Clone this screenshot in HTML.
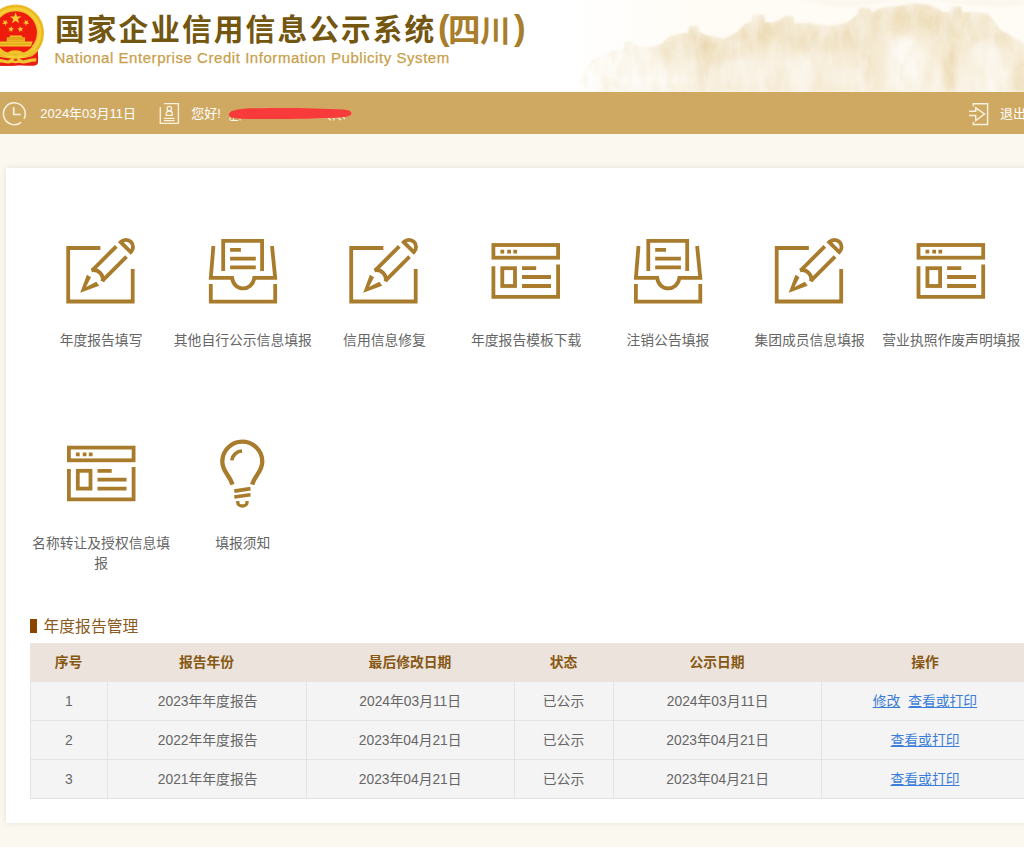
<!DOCTYPE html>
<html lang="zh-CN">
<head>
<meta charset="utf-8">
<title>国家企业信用信息公示系统(四川)</title>
<style>
html,body{margin:0;padding:0}
body{width:1024px;height:847px;overflow:hidden;position:relative;background:#fbf8f0;font-family:"Liberation Sans",sans-serif;}
.abs{position:absolute}
.g{position:absolute;overflow:visible;display:block}
.t{position:absolute;white-space:nowrap;text-align:center;line-height:1.3;height:1.3em;font-family:"Liberation Sans","Noto Sans CJK SC",sans-serif;}
.lnk{text-decoration:underline}
#hdr{position:absolute;left:0;top:0;width:1024px;height:92px;background:#fff;overflow:hidden}
#nav{position:absolute;left:0;top:92px;width:1024px;height:41.5px;background:#cfa961}
#card{position:absolute;left:6px;top:167.5px;width:1060px;height:655.5px;background:#fff;box-shadow:0 0 6px rgba(0,0,0,.10)}
#thead{position:absolute;left:30.3px;top:643.2px;width:1000px;height:38.6px;background:#ebe3dc}
.row{position:absolute;left:30px;width:1000px;height:38px;background:#f4f4f4;border:1px solid #e3e3e3;border-top:none;box-sizing:content-box}
.vl{position:absolute;top:682px;width:1px;height:116px;background:#e3e3e3}
#sub{position:absolute;left:54.4px;top:48.1px;font-size:15px;line-height:20px;letter-spacing:.55px;color:#c9a04a;-webkit-text-stroke:.25px #c9a04a;white-space:nowrap}
</style>
</head>
<body>
<div id="hdr">
<svg class="abs" style="left:0;top:0" width="1024" height="92" viewBox="0 0 1024 92">
<defs>
<clipPath id="mc"><path d="M572 92 580 80 590 62 600 56 612 51 624 49 625 42 636 42 637 47 650 47 661 44 670 36 680 34 688 33 689 26 698 26 699 32 706 35 716 37 724 39 736 33 745 24 752 22 753 15 764 15 765 22 772 23 780 20 785 16 793 16 794 24 807 23 820 25 831 26 842 24 850 21 858 14 859 8 870 8 871 13 878 9 890 7 899 6 908 4 915 3.5 922 4 929 5 936 8 943 12 951 12 951 7 962 7 962 13 971 12 980 13 988 14 994 22 1000 30 1009 35 1017 40 1024 43 1030 92Z"/></clipPath>
<linearGradient id="mh" x1="570" x2="1024" y1="0" y2="0" gradientUnits="userSpaceOnUse">
<stop offset="0" stop-color="#f8f0e0" stop-opacity="0"/><stop offset="0.12" stop-color="#f8f0e0" stop-opacity=".45"/><stop offset="0.36" stop-color="#f5ead4" stop-opacity=".95"/><stop offset="1" stop-color="#f5e9d2" stop-opacity="1"/></linearGradient>
<filter id="mb" x="-5%" y="-20%" width="110%" height="140%"><feGaussianBlur stdDeviation="1.8"/></filter>
<filter id="mb3" x="-5%" y="-50%" width="110%" height="200%"><feGaussianBlur stdDeviation="3"/></filter>
<filter id="mb2" x="-5%" y="-50%" width="110%" height="200%"><feGaussianBlur stdDeviation="5"/></filter>
<filter id="mt" x="0" y="0" width="100%" height="100%">
<feTurbulence type="fractalNoise" baseFrequency="0.07 0.025" numOctaves="4" seed="7" result="n"/>
<feColorMatrix in="n" type="matrix" values="0 0 0 0 1  0 0 0 0 1  0 0 0 0 1  2.6 0 0 0 -0.95" result="a"/>
<feComposite in="a" in2="SourceGraphic" operator="in"/>
<feGaussianBlur stdDeviation="0.6"/>
</filter>
<filter id="mt2" x="0" y="0" width="100%" height="100%">
<feTurbulence type="fractalNoise" baseFrequency="0.09 0.05" numOctaves="3" seed="21" result="n"/>
<feColorMatrix in="n" type="matrix" values="0 0 0 0 0.92  0 0 0 0 0.85  0 0 0 0 0.68  0 2.4 0 0 -1.0" result="a"/>
<feComposite in="a" in2="SourceGraphic" operator="in"/>
<feGaussianBlur stdDeviation="0.6"/>
</filter>
</defs>
<linearGradient id="sk" x1="560" x2="700" y1="0" y2="0" gradientUnits="userSpaceOnUse"><stop offset="0" stop-color="#fffcf6" stop-opacity="0"/><stop offset="1" stop-color="#fffcf6" stop-opacity="1"/></linearGradient><rect x="560" y="0" width="470" height="92" fill="url(#sk)"/>
<path d="M572 92 580 80 590 62 600 56 612 51 624 49 625 42 636 42 637 47 650 47 661 44 670 36 680 34 688 33 689 26 698 26 699 32 706 35 716 37 724 39 736 33 745 24 752 22 753 15 764 15 765 22 772 23 780 20 785 16 793 16 794 24 807 23 820 25 831 26 842 24 850 21 858 14 859 8 870 8 871 13 878 9 890 7 899 6 908 4 915 3.5 922 4 929 5 936 8 943 12 951 12 951 7 962 7 962 13 971 12 980 13 988 14 994 22 1000 30 1009 35 1017 40 1024 43 1030 92Z" fill="url(#mh)" filter="url(#mb)"/>
<g clip-path="url(#mc)"><path d="M661 58 670 50 680 48 688 47 689 40 698 40 699 46 706 49 716 51 724 53 736 47 745 38 752 36 753 29 764 29 765 36 772 37 780 34 785 30 793 30 794 38 807 37 820 39 831 40 842 38 850 35 858 28 859 22 870 22 871 27 878 23 890 21 899 20 908 18 915 17.5 922 18 929 19 936 22 943 26 951 26 951 21 962 21 962 27 971 26 980 27 988 28 994 36 1000 44" fill="none" stroke="#e8d5ab" stroke-width="22" stroke-linejoin="round" filter="url(#mb2)" opacity=".62"/></g>
<g clip-path="url(#mc)" filter="url(#mb3)"><ellipse cx="906" cy="66" rx="20" ry="30" fill="#fff" opacity=".55"/><ellipse cx="986" cy="68" rx="20" ry="28" fill="#fff" opacity=".5"/><ellipse cx="800" cy="74" rx="13" ry="20" fill="#fff" opacity=".45"/><ellipse cx="650" cy="80" rx="34" ry="10" fill="#fff" opacity=".4"/><ellipse cx="748" cy="72" rx="18" ry="16" fill="#fff" opacity=".35"/><ellipse cx="845" cy="78" rx="16" ry="12" fill="#fff" opacity=".3"/><ellipse cx="950" cy="55" rx="5" ry="36" fill="#e4cd9c" opacity=".55"/><ellipse cx="703" cy="64" rx="6" ry="28" fill="#e4cd9c" opacity=".45"/><ellipse cx="866" cy="58" rx="7" ry="26" fill="#e4cd9c" opacity=".4"/><ellipse cx="1018" cy="70" rx="8" ry="24" fill="#e4cd9c" opacity=".35"/></g>
<path d="M572 92 580 80 590 62 600 56 612 51 624 49 625 42 636 42 637 47 650 47 661 44 670 36 680 34 688 33 689 26 698 26 699 32 706 35 716 37 724 39 736 33 745 24 752 22 753 15 764 15 765 22 772 23 780 20 785 16 793 16 794 24 807 23 820 25 831 26 842 24 850 21 858 14 859 8 870 8 871 13 878 9 890 7 899 6 908 4 915 3.5 922 4 929 5 936 8 943 12 951 12 951 7 962 7 962 13 971 12 980 13 988 14 994 22 1000 30 1009 35 1017 40 1024 43 1030 92Z" fill="#fff" filter="url(#mt)" opacity=".45"/>
<path d="M572 92 580 80 590 62 600 56 612 51 624 49 625 42 636 42 637 47 650 47 661 44 670 36 680 34 688 33 689 26 698 26 699 32 706 35 716 37 724 39 736 33 745 24 752 22 753 15 764 15 765 22 772 23 780 20 785 16 793 16 794 24 807 23 820 25 831 26 842 24 850 21 858 14 859 8 870 8 871 13 878 9 890 7 899 6 908 4 915 3.5 922 4 929 5 936 8 943 12 951 12 951 7 962 7 962 13 971 12 980 13 988 14 994 22 1000 30 1009 35 1017 40 1024 43 1030 92Z" fill="#fff" filter="url(#mt2)" opacity=".6"/>
<path d="M800 0H1024V5C990 9 960 3 930 1C900 0 880 3 860 6C840 9 820 4 800 0Z" fill="#f8f0e0" opacity=".45" filter="url(#mb)"/>
</svg>
</div>
<svg class="abs" style="left:0;top:0" width="60" height="80" viewBox="0 0 60 80">
<defs>
<radialGradient id="eg" cx="15.6" cy="33" r="29" gradientUnits="userSpaceOnUse">
<stop offset="0.70" stop-color="#e9b215"/><stop offset="0.84" stop-color="#f7d23a"/><stop offset="0.93" stop-color="#eab31c"/><stop offset="1" stop-color="#f3cf5a"/></radialGradient>
<filter id="eb" x="-10%" y="-10%" width="120%" height="120%"><feGaussianBlur stdDeviation="0.35"/></filter>
</defs>
<g filter="url(#eb)">
<path d="M-12 46H37.6L38.2 58C38 62 37 64.5 35.5 65.2C30 66 24 64.6 15.6 65.4C8 66 0 65.5 -12 65Z" fill="#ea1c12"/>
<circle cx="15.6" cy="33" r="24.9" fill="none" stroke="url(#eg)" stroke-width="7.2"/>
<path d="M-12 53.5C-2 57 6 58.6 15.6 58.6C25 58.6 32 57 37.4 53.2L38 62.5C37.6 64.4 36.6 65 35 65.3C28 66 22 64.8 15.6 65.5C8 66 0 65.6 -12 65Z" fill="#ea1c12"/>
<circle cx="15.6" cy="32.6" r="21.4" fill="#ee1c11"/>
<g fill="#f8d030">
<polygon points="15.60,12.30 16.97,16.51 21.40,16.51 17.82,19.12 19.19,23.34 15.60,20.73 12.01,23.34 13.38,19.12 9.80,16.51 14.23,16.51"/>
<polygon points="6.85,19.74 6.35,22.09 8.43,23.29 6.04,23.54 5.54,25.88 4.57,23.69 2.19,23.94 3.97,22.34 2.99,20.15 5.07,21.35"/>
<polygon points="24.55,19.74 26.33,21.35 28.41,20.15 27.43,22.34 29.21,23.94 26.83,23.69 25.86,25.88 25.36,23.54 22.97,23.29 25.05,22.09"/>
<polygon points="11.57,25.95 11.91,28.32 14.27,28.74 12.11,29.79 12.45,32.17 10.78,30.44 8.63,31.49 9.75,29.38 8.09,27.65 10.45,28.07"/>
<polygon points="19.83,25.95 20.95,28.07 23.31,27.65 21.65,29.38 22.77,31.49 20.62,30.44 18.95,32.17 19.29,29.79 17.13,28.74 19.49,28.32"/>
</g>
<path d="M9.2 37.4L10.2 35.4H21.6L22.6 37.4Z" fill="#f2c428"/>
<rect x="6.8" y="37.4" width="18.2" height="4.3" fill="#e9b51c"/>
<rect x="8" y="38.6" width="15.8" height="1" fill="#d99a10"/>
<path d="M-12 41.6H32.6L31 46.4H-12Z" fill="#efc22a"/>
<rect x="-12" y="43.6" width="44" height="0.9" fill="#d9a010"/>
<path d="M-12 50.5C-3 49 3 51.5 8 52.5C11 49.5 20 49.5 23 52.5C28 51.5 32 49.5 36.8 49.8L36 53C31 53.4 27 55 22.6 56C18 53.8 13 53.8 8.6 56C3 55 -4 53 -12 54Z" fill="#efc22a"/>
<path d="M-12 58.2C-4 57.4 2 59.6 8 60.4C12 57.6 19 57.6 23 60.4C28 59.4 32 58 36.5 58.4L36 61.4C31 61.6 27 63 22.6 63.6C18 62 13 62 8.6 63.6C3 63 -4 61 -12 61.6Z" fill="#f0c62e"/>
<ellipse cx="15.6" cy="59.8" rx="4.6" ry="3.4" fill="#f2c830"/>
<ellipse cx="15.6" cy="59.8" rx="2" ry="1.4" fill="#e8401a"/>
</g></svg>
<div id="sub">National Enterprise Credit Information Publicity System</div>
<div id="nav"></div>
<div id="card"></div>
<div class="abs" style="left:30.2px;top:618.5px;width:6.6px;height:14.5px;background:#8a4503"></div>
<div id="thead"></div>
<div class="row" style="top:682px"></div>
<div class="row" style="top:721px"></div>
<div class="row" style="top:760px"></div>
<div class="vl" style="left:107px"></div>
<div class="vl" style="left:306px"></div>
<div class="vl" style="left:514px"></div>
<div class="vl" style="left:613px"></div>
<div class="vl" style="left:821px"></div>
<svg class="abs" style="left:0;top:0" width="1024" height="847" viewBox="0 0 1024 847" fill="none" stroke="#a87c2c" stroke-width="3.8"><defs>
<g id="i-pen">
<path d="M-0.1 248H-32.25V301.5H32.25V268.9"/>
<g transform="translate(-20.25 292.7) rotate(-45)">
<path d="M0 0L17.5 -8 18.6 -3.3 8.2 0 19.2 3.6 18.3 8.6Z" fill="#a87c2c" stroke="none"/>
<path d="M24 -7.25H58.3M24 7.25H58.3"/>
<path d="M23.8 -7.9A9.4 9.4 0 0 1 23.8 7.9" stroke-width="3.9"/>
<path d="M64.4 -7.1H64.7A7.1 7.1 0 0 1 64.7 7.1H64.4Z" stroke-linejoin="miter"/>
</g></g>
<g id="i-box">
<path d="M-19.8 271V240.9H19.1V271"/>
<path d="M-12.9 249.8H-2.1M-12.9 258.6H12.8M-12.9 267.3H12.8"/>
<path d="M-29.6 246L-32.2 277.8H-10.9C-9.5 292 9.5 292 11.3 277.8H32.2L29 246" stroke-linejoin="miter"/>
<path d="M-32.2 284.1V301.6H32.2V284.1"/>
</g>
<g id="i-win">
<rect x="-32.35" y="245" width="64.7" height="12.7"/>
<path d="M-25.35 251.7H-21.55M-18.55 251.7H-14.75M-12.45 251.7H-8.65"/>
<path d="M-32.35 266.3V296.8H32.35V264.4"/>
<rect x="-23.45" y="268.2" width="12.7" height="17.8"/>
<path d="M-3.75 268.2H10.45M-3.75 277H25.25M-3.75 286H25.25"/>
</g>
<g id="i-bulb">
<path d="M-9.9 484.6C-12.3 475.5 -20 472 -20 461.6A20 20 0 0 1 20 461.6C20 472 12.3 475.5 9.9 484.6" stroke-width="4.3"/>
<path d="M-10.5 460.4A10.5 10.5 0 0 1 -0.3 451" stroke-width="3.7"/>
<path d="M-8 491.1L8.2 488.6M-8 497L8.2 494.7" stroke-width="3.6"/>
<path d="M-4.55 501.1V502.4A4.65 3.6 0 0 0 4.75 502.4V501.1" stroke-width="3.3"/>
</g>
</defs>
<use href="#i-pen" x="100.45" y="0.00"/>
<use href="#i-box" x="243.00" y="0.00"/>
<use href="#i-pen" x="383.45" y="0.00"/>
<use href="#i-win" x="525.75" y="0.00"/>
<use href="#i-box" x="668.10" y="0.00"/>
<use href="#i-pen" x="808.95" y="0.00"/>
<use href="#i-win" x="950.85" y="0.00"/>
<use href="#i-win" x="101.25" y="202.60"/>
<use href="#i-bulb" x="242.30" y="0.00"/>
</svg><svg class="abs" style="left:0;top:92px" width="1024" height="42" viewBox="0 92 1024 42" fill="none" stroke="#fffaf0" stroke-opacity=".88" stroke-width="1.5">
<path d="M21.06 122.34A10.90 10.90 0 1 1 23.97 118.87"/>
<path d="M13.7 107.2V114.5H20.7" stroke-width="1.7"/>
<path d="M160.3 107.2V123.4H178.4V103.6H164" stroke-width="1.4"/>
<circle cx="169.3" cy="108.6" r="2.3" stroke-width="1.3"/>
<path d="M166.3 115.4V113.6A3 2.6 0 0 1 172.3 113.6V115.4Z" stroke-width="1.3"/>
<path d="M163.9 118.3H174.6M163.9 120.6H174.6" stroke-width="1.2"/>
<path d="M973.3 106.3V103.8H987.6V124.5H973.3V121.9" stroke-width="1.5"/>
<path d="M969.1 111.3H975.7V107.8L984.5 114 975.7 120.5V115.6H969.1" stroke-width="1.5" stroke-linejoin="miter"/>
<path d="M230 117.5V120.5M233.5 118.5V120.5M231 120.5H238M240 118.8V120.4M328 117.8L331 120.3M334 118V120.4M337.5 117.6L341 120M343 117.2L345 119.2" stroke="#fff" stroke-width="1.1" stroke-opacity=".9"/>
<path d="M229 114C231 108.6 245 108.4 262 108.2C290 107.6 320 108.4 343 109.6C349 110 351.6 111.6 351.4 113.4C351.2 115.6 348 116.8 342 117.2C320 118.6 285 119.2 258 119C244 118.9 232 118.6 229.6 116.4C229 115.6 228.8 114.8 229 114Z" fill="#f93a3a" stroke="none"/>
</svg>
<span class="t" style="left:54.9px;top:10.9px;font-size:29.7px;width:381.7px;color:#73560f;font-weight:bold;letter-spacing:2.1px;text-align:left">国家企业信用信息公示系统</span>
<span class="t" style="left:448.0px;top:10.3px;font-size:32.6px;width:32.6px;color:#a87e2c;font-weight:bold">四</span>
<span class="t" style="left:479.9px;top:11.5px;font-size:30.6px;width:30.6px;color:#a87e2c;font-weight:bold">川</span>
<span class="t" style="left:438px;top:4.6px;font-size:35px;width:11.7px;color:#a87e2c;font-weight:bold">(</span>
<span class="t" style="left:514px;top:4.6px;font-size:35px;width:11.7px;color:#a87e2c;font-weight:bold">)</span>
<span class="t" style="left:39.8px;top:106.0px;font-size:13px;width:96.7px;color:#ffffff">2024年03月11日</span>
<span class="t" style="left:191.0px;top:106.0px;font-size:13px;width:30.2px;color:#ffffff">您好!</span>
<span class="t" style="left:1000.0px;top:106.0px;font-size:13px;width:26.0px;color:#ffffff">退出</span>
<span class="t" style="left:59.7px;top:332.3px;font-size:13.8px;width:82.8px;color:#666666">年度报告填写</span>
<span class="t" style="left:173.8px;top:332.3px;font-size:13.8px;width:138.0px;color:#666666">其他自行公示信息填报</span>
<span class="t" style="left:343.1px;top:332.3px;font-size:13.8px;width:82.8px;color:#666666">信用信息修复</span>
<span class="t" style="left:471.0px;top:332.3px;font-size:13.8px;width:110.4px;color:#666666">年度报告模板下载</span>
<span class="t" style="left:626.5px;top:332.3px;font-size:13.8px;width:82.8px;color:#666666">注销公告填报</span>
<span class="t" style="left:754.4px;top:332.3px;font-size:13.8px;width:110.4px;color:#666666">集团成员信息填报</span>
<span class="t" style="left:882.3px;top:332.3px;font-size:13.8px;width:138.0px;color:#666666">营业执照作废声明填报</span>
<span class="t" style="left:32.1px;top:535.4px;font-size:13.8px;width:138.0px;color:#666666">名称转让及授权信息填</span>
<span class="t" style="left:94.2px;top:555.3px;font-size:13.8px;width:13.8px;color:#666666">报</span>
<span class="t" style="left:215.2px;top:535.4px;font-size:13.8px;width:55.2px;color:#666666">填报须知</span>
<span class="t" style="left:43.5px;top:616.5px;font-size:15.8px;width:94.8px;color:#8a5a1e">年度报告管理</span>
<span class="t" style="left:54.7px;top:654.0px;font-size:13.8px;width:27.6px;color:#875814;font-weight:bold">序号</span>
<span class="t" style="left:178.9px;top:654.0px;font-size:13.8px;width:55.2px;color:#875814;font-weight:bold">报告年份</span>
<span class="t" style="left:368.6px;top:654.0px;font-size:13.8px;width:82.8px;color:#875814;font-weight:bold">最后修改日期</span>
<span class="t" style="left:549.7px;top:654.0px;font-size:13.8px;width:27.6px;color:#875814;font-weight:bold">状态</span>
<span class="t" style="left:689.4px;top:654.0px;font-size:13.8px;width:55.2px;color:#875814;font-weight:bold">公示日期</span>
<span class="t" style="left:911.2px;top:654.0px;font-size:13.8px;width:27.6px;color:#875814;font-weight:bold">操作</span>
<span class="t" style="left:64.8px;top:692.9px;font-size:13.8px;width:7.9px;color:#666666">1</span>
<span class="t" style="left:157.4px;top:692.9px;font-size:13.8px;width:100.5px;color:#666666">2023年年度报告</span>
<span class="t" style="left:358.0px;top:692.9px;font-size:13.8px;width:104.4px;color:#666666">2024年03月11日</span>
<span class="t" style="left:542.8px;top:692.9px;font-size:13.8px;width:41.4px;color:#666666">已公示</span>
<span class="t" style="left:665.5px;top:692.9px;font-size:13.8px;width:104.4px;color:#666666">2024年03月11日</span>
<span class="t" style="left:64.8px;top:731.9px;font-size:13.8px;width:7.9px;color:#666666">2</span>
<span class="t" style="left:157.4px;top:731.9px;font-size:13.8px;width:100.5px;color:#666666">2022年年度报告</span>
<span class="t" style="left:358.0px;top:731.9px;font-size:13.8px;width:104.4px;color:#666666">2023年04月21日</span>
<span class="t" style="left:542.8px;top:731.9px;font-size:13.8px;width:41.4px;color:#666666">已公示</span>
<span class="t" style="left:665.5px;top:731.9px;font-size:13.8px;width:104.4px;color:#666666">2023年04月21日</span>
<span class="t" style="left:64.8px;top:770.9px;font-size:13.8px;width:7.9px;color:#666666">3</span>
<span class="t" style="left:157.4px;top:770.9px;font-size:13.8px;width:100.5px;color:#666666">2021年年度报告</span>
<span class="t" style="left:358.0px;top:770.9px;font-size:13.8px;width:104.4px;color:#666666">2023年04月21日</span>
<span class="t" style="left:542.8px;top:770.9px;font-size:13.8px;width:41.4px;color:#666666">已公示</span>
<span class="t" style="left:665.5px;top:770.9px;font-size:13.8px;width:104.4px;color:#666666">2023年04月21日</span>
<span class="t lnk" style="left:872.7px;top:692.8px;font-size:13.8px;width:27.6px;color:#3b7dd8">修改</span>
<span class="t lnk" style="left:908.2px;top:692.8px;font-size:13.8px;width:69.0px;color:#3b7dd8">查看或打印</span>
<span class="t lnk" style="left:890.5px;top:731.8px;font-size:13.8px;width:69.0px;color:#3b7dd8">查看或打印</span>
<span class="t lnk" style="left:890.5px;top:770.8px;font-size:13.8px;width:69.0px;color:#3b7dd8">查看或打印</span>
</body>
</html>
